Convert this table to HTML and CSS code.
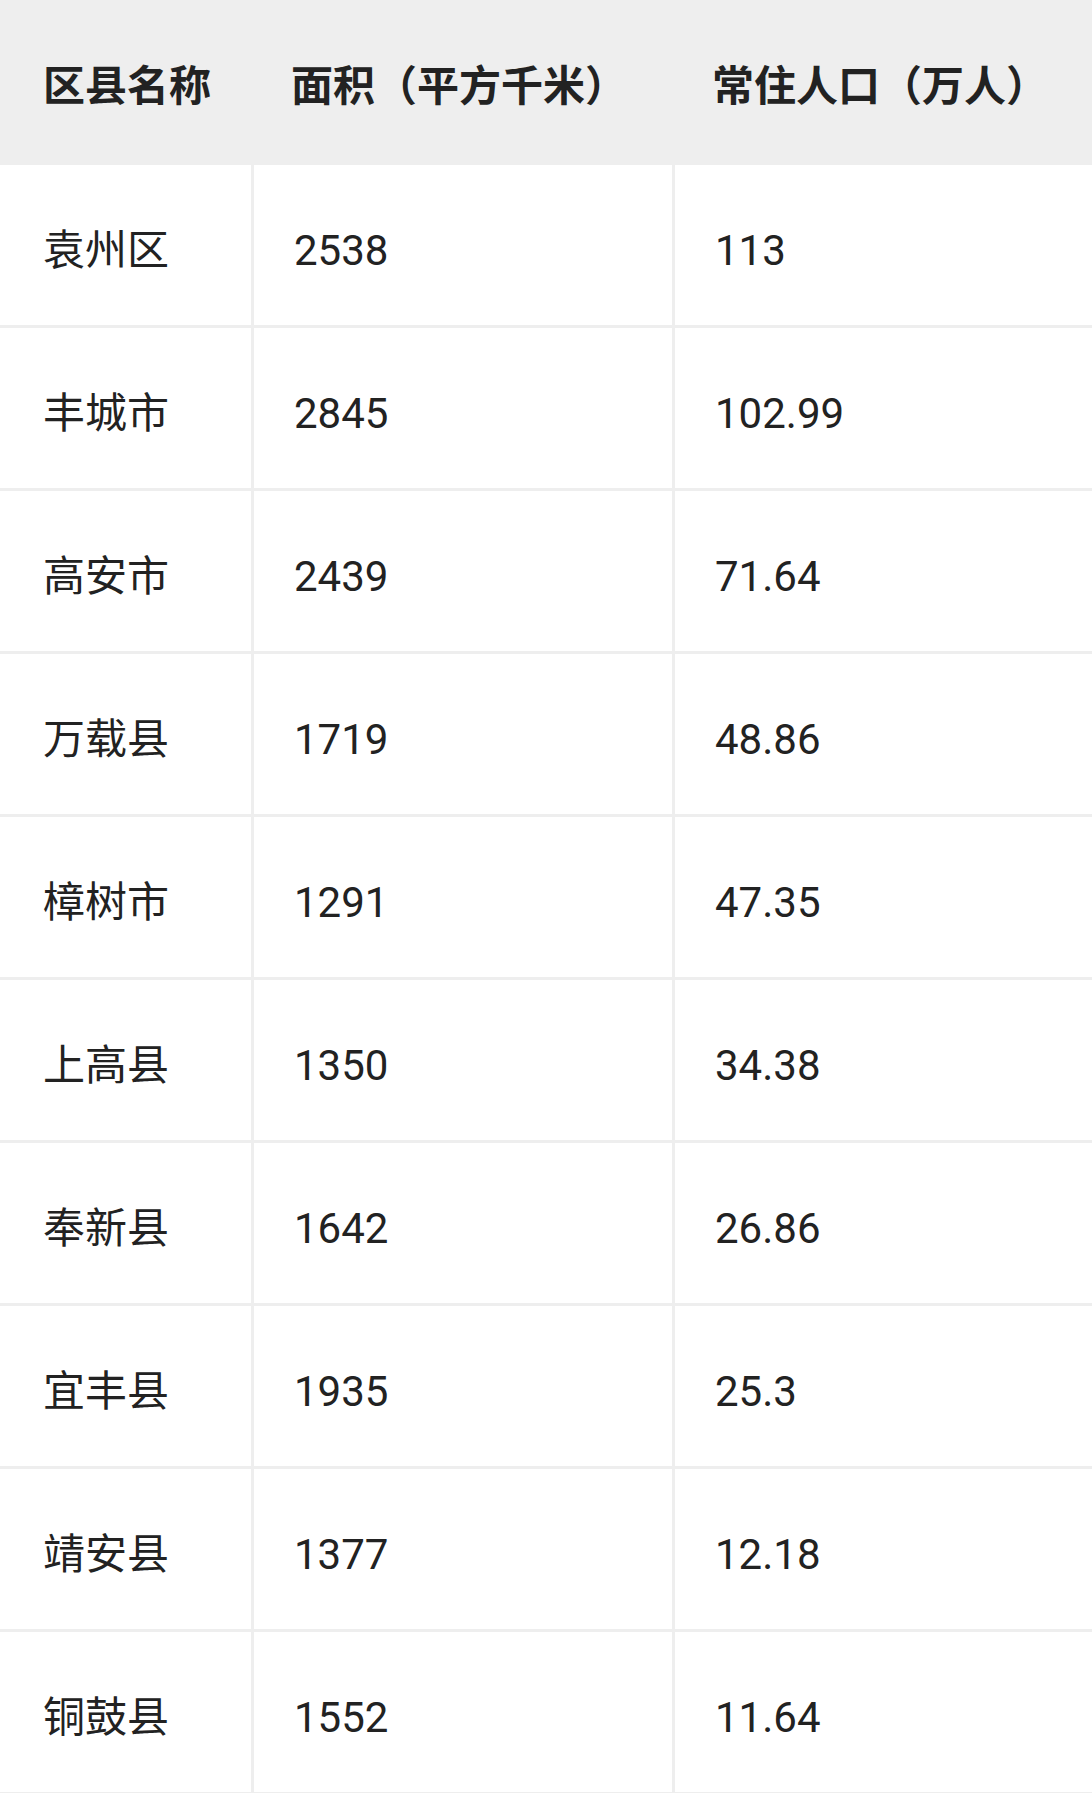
FILE: index.html
```html
<!DOCTYPE html>
<html lang="zh-CN">
<head>
<meta charset="utf-8">
<title>区县数据</title>
<link rel="stylesheet" href="styles.css">
</head>
<body>
<table class="data-table">
  <colgroup>
    <col class="col-name">
    <col class="col-area">
    <col class="col-pop">
  </colgroup>
  <thead>
    <tr>
      <th>区县名称</th>
      <th>面积（平方千米）</th>
      <th>常住人口（万人）</th>
    </tr>
  </thead>
  <tbody>
    <tr><td>袁州区</td><td>2538</td><td>113</td></tr>
    <tr><td>丰城市</td><td>2845</td><td>102.99</td></tr>
    <tr><td>高安市</td><td>2439</td><td>71.64</td></tr>
    <tr><td>万载县</td><td>1719</td><td>48.86</td></tr>
    <tr><td>樟树市</td><td>1291</td><td>47.35</td></tr>
    <tr><td>上高县</td><td>1350</td><td>34.38</td></tr>
    <tr><td>奉新县</td><td>1642</td><td>26.86</td></tr>
    <tr><td>宜丰县</td><td>1935</td><td>25.3</td></tr>
    <tr><td>靖安县</td><td>1377</td><td>12.18</td></tr>
    <tr><td>铜鼓县</td><td>1552</td><td>11.64</td></tr>
  </tbody>
</table>
</body>
</html>
```
FILE: styles.css
```css
html, body {
  margin: 0;
  padding: 0;
  background: #ffffff;
}

body {
  font-family: Roboto, "Noto Sans CJK SC", "Noto Sans", sans-serif;
  color: #222222;
}

.data-table {
  width: 1092px;
  table-layout: fixed;
  border-collapse: separate;
  border-spacing: 0;
}

.col-name { width: 251px; }
.col-area { width: 421px; }
.col-pop { width: 420px; }

.data-table th,
.data-table td {
  box-sizing: border-box;
  text-align: left;
  vertical-align: middle;
  padding: 0 0 0 40px;
  font-size: 42px;
  line-height: 1;
  white-space: nowrap;
}

.data-table th:first-child,
.data-table td:first-child {
  padding-left: 43px;
}

.data-table th {
  background: #eeeeee;
  height: 165px;
  padding-top: 8px;
  font-weight: 700;
}

.data-table td {
  height: 163px;
  padding-top: 11px;
  border-bottom: 3px solid #eeeeee;
  font-weight: 400;
}

.data-table td + td {
  border-left: 3px solid #eeeeee;
}
```
